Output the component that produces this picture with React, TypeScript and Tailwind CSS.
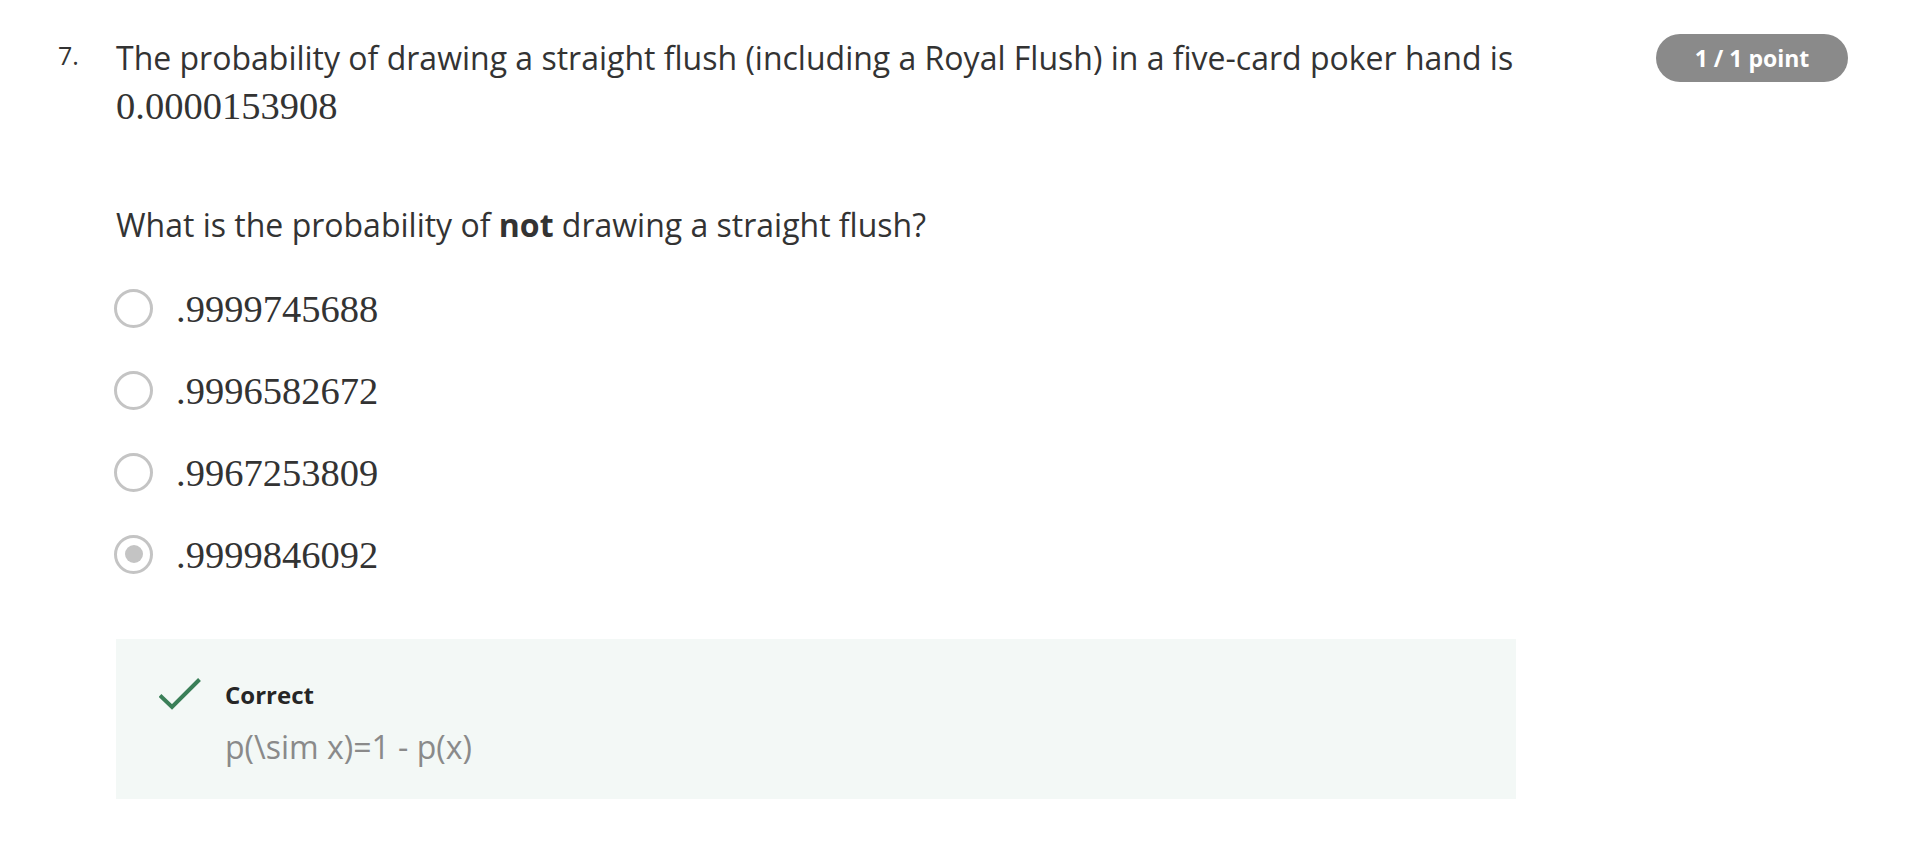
const options = [".9999745688", ".9996582672", ".9967253809", ".9999846092"];

const Radio = ({checked}: {checked: boolean}) => (
  <div className="flex h-[39px] w-[39px] shrink-0 items-center justify-center rounded-full border-[3px] border-[#c4c4c4] bg-white">
    {checked && <div className="h-[18px] w-[18px] rounded-full bg-[#c4c4c4]" />}
  </div>
);

const App = () => {
  return (
    <div className="min-h-[860px] w-full bg-white px-[58px] text-[#333333] [font-family:'Open_Sans',sans-serif]">
      <div className="flex">
        <div className="w-[58px] shrink-0 pt-[38px] text-[25px] leading-[34px]">7.</div>

        <div className="w-[1400px] shrink-0">
          <div className="pt-[34px] text-[32px] leading-[48px]">
            The probability of drawing a straight flush (including a Royal Flush) in a five-card poker hand is
          </div>
          <div className="text-[38.5px] leading-[48px] [font-family:'Liberation_Serif',serif]">0.0000153908</div>

          <p className="mt-[71px] text-[32px] leading-[48px]">
            What is the probability of <b className="font-bold">not</b> drawing a straight flush?
          </p>

          <div className="mt-[35px] flex flex-col gap-[34px]">
            {options.map((opt, i) => (
              <div key={opt} className="flex h-[48px] items-center">
                <div className="-ml-[2px]">
                  <Radio checked={i === 3} />
                </div>
                <span className="ml-[23px] pt-[1px] text-[38.5px] leading-[48px] [font-family:'Liberation_Serif',serif]">
                  {opt}
                </span>
              </div>
            ))}
          </div>

          <div className="mt-[61px] flex h-[160px] bg-[#f3f8f6] pl-[43px] pt-[40px]">
            <svg width="42" height="34" viewBox="0 0 42 34" className="-mt-[1px] shrink-0">
              <polyline points="1,17.5 13,29 40.5,1.5" fill="none" stroke="#3a7f58" strokeWidth="4" />
            </svg>
            <div className="ml-[24px]">
              <div className="text-[24px] font-bold leading-[32px] text-[#262626]">Correct</div>
              <div className="mt-[14px] text-[32px] leading-[44px] text-[#8a8a8a]">p(\sim x)=1 - p(x)</div>
            </div>
          </div>
        </div>

        <div className="ml-auto pt-[34px]">
          <div className="flex h-[48px] w-[192px] items-center justify-center rounded-full bg-[#8a8a8a] text-[23px] font-bold text-white">
            1 / 1 point
          </div>
        </div>
      </div>
    </div>
  );
};

export default App;
